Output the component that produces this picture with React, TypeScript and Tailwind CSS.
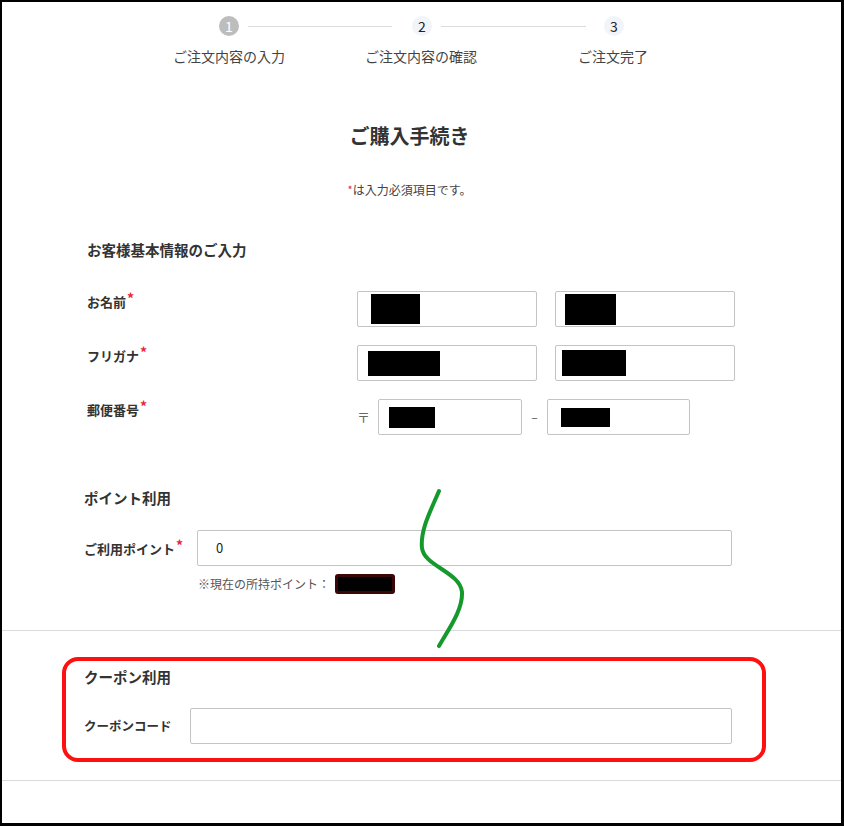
import React from 'react'

const font = { fontFamily: '"Noto Sans CJK JP", "Noto Sans", sans-serif' }

function Req() {
  return <span className="relative -top-[3px] ml-[1px] text-[14px] font-bold text-[#e8253b]">*</span>
}

function Box({ w, h, ml }: { w: string; h: string; ml: string }) {
  return <span className={`block bg-black ${w} ${h} ${ml}`} />
}

function Field({ className, children }: { className: string; children?: React.ReactNode }) {
  return (
    <div className={`flex h-[36px] items-center border border-[#c4c4c4] rounded-[2px] bg-white ${className}`}>
      {children}
    </div>
  )
}

function Step({ n, active }: { n: string; active?: boolean }) {
  return (
    <div
      className={`flex h-[20px] w-[20px] items-center justify-center rounded-full text-[14px] leading-none ${
        active ? 'bg-[#bdbdbd] text-white' : 'bg-[#f1f4f8] text-[#222]'
      }`}
    >
      {n}
    </div>
  )
}

export default function App() {
  return (
    <div
      style={font}
      className="relative h-[826px] w-[844px] overflow-hidden border-l-2 border-t-2 border-r-[3px] border-b-[3px] border-black bg-white text-[#333]"
    >
      {/* stepper */}
      <div className="ml-[217px] mt-[14px] flex items-center">
        <Step n="1" active />
        <div className="ml-[9px] h-px w-[144px] bg-[#dcdcdc]" />
        <div className="ml-[20px]">
          <Step n="2" />
        </div>
        <div className="ml-[9px] h-px w-[145px] bg-[#dcdcdc]" />
        <div className="ml-[18px]">
          <Step n="3" />
        </div>
      </div>
      <div className="ml-[132px] mt-[10px] grid grid-cols-[190px_190px_190px] gap-x-[2px] text-center text-[14px] leading-[20px] text-[#444]">
        <div>ご注文内容の入力</div>
        <div>ご注文内容の確認</div>
        <div>ご注文完了</div>
      </div>

      {/* form */}
      <div className="ml-[82px] w-[651px]">
        <h1 className="mt-[56px] text-center text-[20px] font-bold leading-[28px] text-[#333]">ご購入手続き</h1>
        <p className="mt-[31px] text-center text-[12px] leading-[18px] text-[#444]">
          <span className="relative -top-[1px] text-[11px] text-[#e8253b]">*</span>は入力必須項目です。
        </p>

        <h2 className="mt-[40px] pl-[3px] text-[14.5px] font-bold leading-[22px]">お客様基本情報のご入力</h2>

        <div className="mt-[30px] flex">
          <div className="w-[273px] pl-[3px] text-[13px] font-bold leading-[20px]">
            お名前<Req />
          </div>
          <Field className="w-[180px]">
            <Box w="w-[49px]" h="h-[30px]" ml="ml-[13px]" />
          </Field>
          <Field className="ml-[18px] w-[180px]">
            <Box w="w-[51px]" h="h-[31px]" ml="ml-[9px]" />
          </Field>
        </div>

        <div className="mt-[18px] flex">
          <div className="w-[273px] pl-[3px] text-[13px] font-bold leading-[20px]">
            フリガナ<Req />
          </div>
          <Field className="w-[180px]">
            <Box w="w-[72px]" h="h-[25px]" ml="ml-[10px]" />
          </Field>
          <Field className="ml-[18px] w-[180px]">
            <Box w="w-[64px]" h="h-[26px]" ml="ml-[6px]" />
          </Field>
        </div>

        <div className="mt-[18px] flex">
          <div className="w-[273px] pl-[3px] text-[13px] font-bold leading-[20px]">
            郵便番号<Req />
          </div>
          <div className="flex h-[36px] w-[21px] items-center text-[13px] text-[#666]">〒</div>
          <Field className="w-[144px]">
            <Box w="w-[46px]" h="h-[21px]" ml="ml-[10px]" />
          </Field>
          <div className="flex h-[36px] w-[25px] items-center justify-center text-[12px] text-[#555]">–</div>
          <Field className="w-[143px]">
            <Box w="w-[49px]" h="h-[19px]" ml="ml-[13px]" />
          </Field>
        </div>

        <h2 className="mt-[52px] text-[14.5px] font-bold leading-[22px]">ポイント利用</h2>
        <div className="mt-[21px] flex items-center">
          <div className="w-[113px] text-[13px] font-bold leading-[20px]">
            ご利用ポイント<Req />
          </div>
          <Field className="w-[535px]">
            <span className="ml-[18px] text-[13px] text-[#222]">0</span>
          </Field>
        </div>
        <div className="ml-[114px] mt-[8px] flex h-[20px] items-center text-[12px] text-[#555]">
          ※現在の所持ポイント：
          <span className="ml-[5px] block h-[20px] w-[60px] rounded-[3px] border-[3px] border-[#3a0606] bg-black" />
        </div>
      </div>

      <div className="mt-[36px] h-px w-full bg-[#d8dcdf]" />

      <div className="ml-[82px] w-[651px]">
        <h2 className="mt-[35px] text-[14.5px] font-bold leading-[22px]">クーポン利用</h2>
        <div className="mt-[20px] flex items-center">
          <div className="w-[106px] text-[12.5px] font-bold leading-[20px]">クーポンコード</div>
          <Field className="w-[542px]" />
        </div>
      </div>

      <div className="mt-[36px] h-px w-full bg-[#d8dcdf]" />

      {/* annotations */}
      <div className="absolute left-[60px] top-[655px] h-[105px] w-[704px] rounded-[16px] border-4 border-[#ff1010]" />
      <svg className="absolute left-0 top-0" width="844" height="826" viewBox="2 2 844 826" fill="none">
        <path
          d="M439 491 C431 510 420 530 422 548 C424 566 460 572 462 592 C463 610 448 630 439 646"
          stroke="#16992c"
          strokeWidth="4"
          strokeLinecap="round"
        />
      </svg>
    </div>
  )
}
